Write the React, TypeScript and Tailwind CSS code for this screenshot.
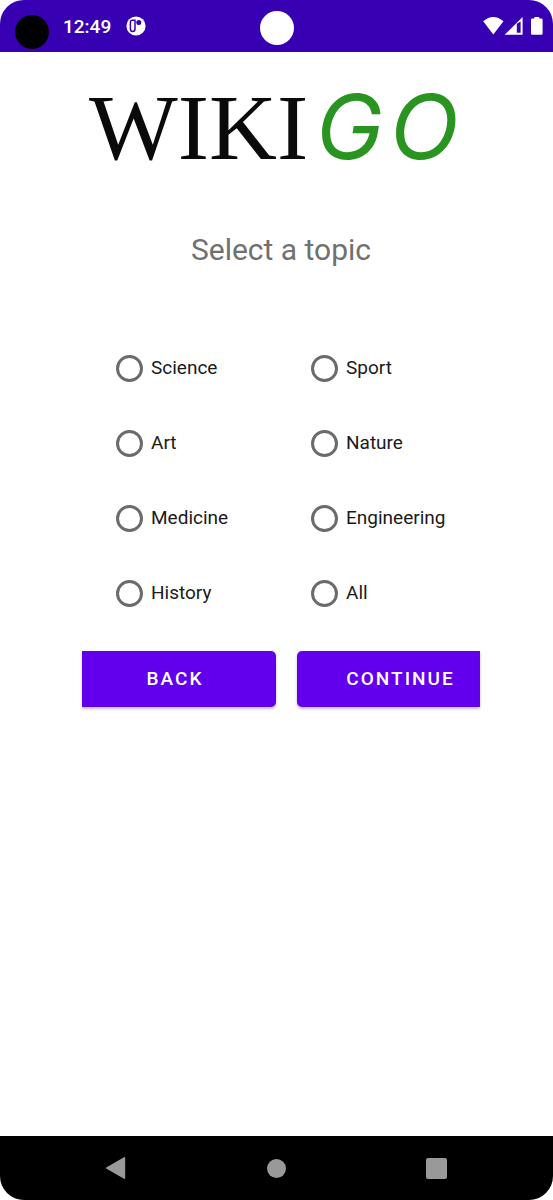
import { useState } from "react";

const TOPICS = [
  "Science",
  "Sport",
  "Art",
  "Nature",
  "Medicine",
  "Engineering",
  "History",
  "All",
];

function StatusBar() {
  return (
    <header className="grid h-[52px] shrink-0 grid-cols-[1fr_auto_1fr] items-center bg-[#3700b3] text-white">
      <div className="flex items-center pl-[15px]">
        <span className="mt-3 size-[34px] rounded-full bg-black" />
        <span className="ml-[14px] pt-0.5 text-[19px] leading-6 font-medium">12:49</span>
        <svg className="ml-[15px] size-5" viewBox="0 0 20 20" aria-hidden="true">
          <circle cx="10" cy="10" r="9.6" fill="#fff" />
          <path
            d="M9 4.2H6.2Q4.4 4.2 4.4 6V12.5Q4.4 15.6 6.7 15.6Q9 15.6 9 12.5Z"
            fill="none"
            stroke="#3700b3"
            strokeWidth="1.5"
          />
          <circle cx="12.8" cy="6.4" r="2.5" fill="#3700b3" />
        </svg>
      </div>
      <span className="mt-1 size-[34px] rounded-full bg-white" />
      <div className="flex items-center justify-end pr-[9px]">
        <svg className="h-5 w-[61px]" viewBox="0 0 61 20" fill="#fff" aria-hidden="true">
          <path d="M0.2 5.2Q10.3-3.4 20.5 5.2L10.3 18.4Z" />
          <path
            fillRule="evenodd"
            d="M21.6 18.8L39.6 1V18.8ZM33.8 7.8V16.8H37.6V5.4Z"
          />
          <path d="M51.4 1H56.2V2.6H58.4Q59.6 2.6 59.6 3.8V17.6Q59.6 18.8 58.4 18.8H49.2Q48 18.8 48 17.6V3.8Q48 2.6 49.2 2.6H51.4Z" />
        </svg>
      </div>
    </header>
  );
}

function Logo() {
  return (
    <svg
      className="mx-auto h-[128px] w-full max-w-[398px]"
      viewBox="0 0 398 128"
      role="img"
      aria-label="Wikigo"
    >
      <text x="7" y="99" fontSize="94" fill="#0a0a0a" className="font-['Liberation_Serif',serif]">
        WIKI
      </text>
      <text x="234" y="99" fontSize="90" fill="#2a9420" className="font-[Inter,sans-serif] italic">
        G
      </text>
      <text x="308" y="99" fontSize="90" fill="#2a9420" className="font-[Inter,sans-serif] italic">
        O
      </text>
    </svg>
  );
}

function NavigationBar() {
  return (
    <nav className="flex h-16 shrink-0 items-center justify-between bg-black px-[106px] text-[#999]">
      <button type="button" aria-label="Back">
        <svg className="h-[22px] w-5" viewBox="0 0 20 22" fill="currentColor">
          <path d="M18 0.2Q19.2-0.4 19.2 1V21Q19.2 22.4 18 21.8L0.6 11.8Q-0.8 11 0.6 10.2Z" />
        </svg>
      </button>
      <button type="button" aria-label="Home" className="size-[19px] rounded-full bg-[#999]" />
      <button type="button" aria-label="Overview" className="size-[21px] rounded-xs bg-[#999]" />
    </nav>
  );
}

export default function App() {
  const [topic, setTopic] = useState("");

  return (
    <div className="flex min-h-screen flex-col overflow-hidden rounded-3xl bg-white font-[Roboto,sans-serif]">
      <StatusBar />

      <main className="grow pt-2 pr-[73px] pl-[82px]">
        <Logo />
        <h1 id="topic-title" className="mt-[42px] text-center text-[30px] leading-10 text-[#707070]">
          Select a topic
        </h1>

        <div
          role="radiogroup"
          aria-labelledby="topic-title"
          className="mt-[61px] grid grid-cols-[195fr_169fr] pl-[34px]"
        >
          {TOPICS.map((name) => (
            <label key={name} className="flex h-[75px] items-center gap-2 text-[19px] text-[#1a1a1a]">
              <input
                type="radio"
                name="topic"
                value={name}
                checked={topic === name}
                onChange={() => setTopic(name)}
                className="size-[27px] shrink-0 appearance-none rounded-full border-3 border-[#6b6b6b] checked:border-8 checked:border-[#6200ee]"
              />
              {name}
            </label>
          ))}
        </div>

        <div className="mt-5 grid grid-cols-[194fr_183fr] gap-[21px] text-[19px] font-medium tracking-[2px] text-white">
          <button
            type="button"
            className="h-14 rounded-r-[5px] bg-[#6200ee] pr-2 shadow-[0_2px_3px_rgba(0,0,0,0.25)]"
          >
            BACK
          </button>
          <button
            type="button"
            className="h-14 rounded-l-[5px] bg-[#6200ee] pl-6 shadow-[0_2px_3px_rgba(0,0,0,0.25)]"
          >
            CONTINUE
          </button>
        </div>
      </main>

      <NavigationBar />
    </div>
  );
}
